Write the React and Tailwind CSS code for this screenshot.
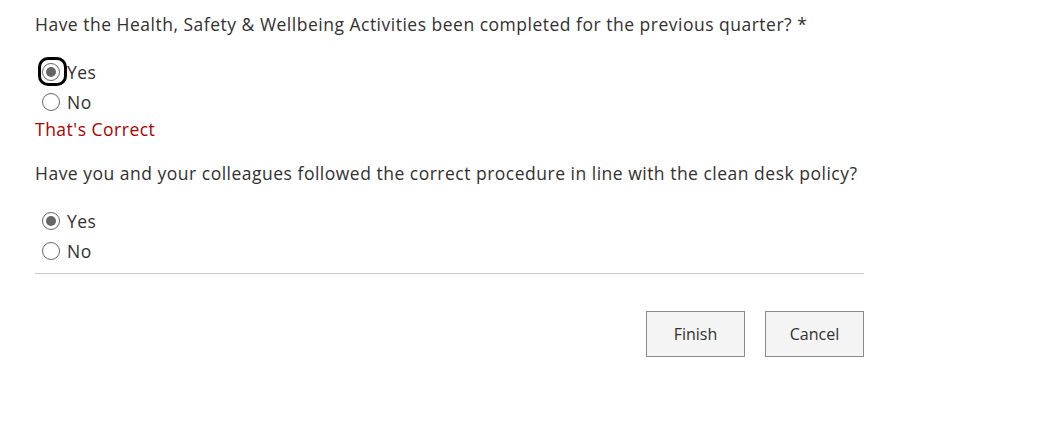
import React from "react";

function Radio({ checked, focused, label }) {
  return (
    <label className="flex items-center h-[30px]">
      <span className="relative w-[32px] h-[30px] flex items-center justify-center">
        {focused && (
          <span className="absolute left-[3px] top-[0px] w-[29px] h-[29px] rounded-[10px] border-[3px] border-black" />
        )}
        <span className="w-[18px] h-[18px] rounded-full border border-[#666] bg-white flex items-center justify-center relative">
          {checked && <span className="w-[10px] h-[10px] rounded-full bg-[#666]" />}
        </span>
      </span>
      <span>{label}</span>
    </label>
  );
}

export default function App() {
  return (
    <div
      className="w-[1042px] h-[433px] bg-white text-[#323130] text-[17.5px] tracking-[0.5px]"
      style={{ fontFamily: '"Open Sans", "Noto Sans", sans-serif' }}
    >
      <div className="pl-[35px] pt-[10px] w-[864px]">
        <div className="leading-[28px]">
          Have the Health, Safety &amp; Wellbeing Activities been completed for the previous quarter? *
        </div>
        <div className="mt-[19px]">
          <Radio checked focused label="Yes" />
          <Radio label="No" />
        </div>
        <div className="text-[#a80000] leading-[24px]">That's Correct</div>
        <div className="leading-[28px] mt-[18px]">
          Have you and your colleagues followed the correct procedure in line with the clean desk policy?
        </div>
        <div className="mt-[19px]">
          <Radio checked label="Yes" />
          <Radio label="No" />
        </div>
        <div className="mt-[7px] h-px bg-[#c8c8c8]" />
        <div className="flex justify-end gap-[20px] mt-[37px] tracking-normal">
          <button className="w-[99px] h-[46px] bg-[#f4f4f4] border border-[#8a8a8a] text-[16px] text-[#323130]">
            Finish
          </button>
          <button className="w-[99px] h-[46px] bg-[#f4f4f4] border border-[#8a8a8a] text-[16px] text-[#323130]">
            Cancel
          </button>
        </div>
      </div>
    </div>
  );
}
